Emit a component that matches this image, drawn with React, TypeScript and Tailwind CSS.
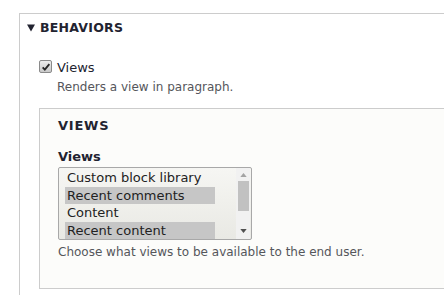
import React from "react";

const options = [
  { label: "Custom block library", selected: false },
  { label: "Recent comments", selected: true },
  { label: "Content", selected: false },
  { label: "Recent content", selected: true },
];

function Checkbox() {
  return (
    <span className="mt-px flex h-[13px] w-[13px] shrink-0 items-center justify-center rounded-[2px] border border-[#8a8a8a] bg-gradient-to-b from-[#ececec] to-[#c9c9c9]">
      <svg viewBox="0 0 12 12" className="h-[10px] w-[10px]">
        <path d="M2 6.5 L4.6 9.2 L10 2.6" fill="none" stroke="#262626" strokeWidth="2.2" />
      </svg>
    </span>
  );
}

function ViewsSelect() {
  return (
    <div className="mt-px flex h-[73px] w-[194px] rounded-[2px] border border-[#a8a8a8] bg-gradient-to-b from-[#f6f6f3] to-[#e9e9e4]">
      <div className="ml-[6px] mt-px w-[150px]">
        {options.map((o) => (
          <div
            key={o.label}
            className={`h-[17.5px] whitespace-nowrap pl-[2px] text-[13px] leading-[17.5px] text-[#222] ${
              o.selected ? "bg-[#c6c6c6]" : ""
            }`}
          >
            {o.label}
          </div>
        ))}
      </div>
      <div className="ml-auto mr-px flex w-[14px] flex-col items-center bg-[#f1f1f1]">
        <svg viewBox="0 0 8 5" className="mt-[5px] h-[4px] w-[7px]">
          <path d="M0 5 L4 0 L8 5 Z" fill="#a3a3a3" />
        </svg>
        <div className="mt-[4px] h-[30px] w-[11px] bg-[#c1c1c1]" />
        <svg viewBox="0 0 8 5" className="mt-auto mb-[6px] h-[4px] w-[7px]">
          <path d="M0 0 L8 0 L4 5 Z" fill="#505050" />
        </svg>
      </div>
    </div>
  );
}

export default function App() {
  return (
    <div className="h-[295px] w-[444px] overflow-hidden bg-white font-['DejaVu_Sans',sans-serif] text-[#222330]">
      <div className="ml-[19px] mt-[13px] h-[400px] w-[520px] border border-[#cccccc] bg-white">
        {/* Summary */}
        <div className="flex h-[28px] items-center gap-[5px] pl-[7px]">
          <svg viewBox="0 0 10 9" className="h-[8px] w-[8px]">
            <path d="M0 0 L10 0 L5 9 Z" fill="#222330" />
          </svg>
          <span className="text-[12.5px] font-bold uppercase tracking-[0.02em]">Behaviors</span>
        </div>

        <div className="pl-[19px] pt-[17px]">
          <label className="flex items-start gap-[5px]">
            <Checkbox />
            <span className="text-[13px] leading-[18px]">Views</span>
          </label>
          <div className="mt-px pl-[18px] text-[12px] leading-[18px] text-[#55565b]">
            Renders a view in paragraph.
          </div>

          {/* Inner fieldset */}
          <div className="mt-[12px] h-[181px] border border-[#cccccc] bg-[#fcfcfa] pl-[18px] pt-[8px]">
            <div className="text-[13px] font-bold uppercase leading-[18px] tracking-[0.06em]">Views</div>
            <div className="mt-[13px] text-[13px] font-bold leading-[18px]">Views</div>
            <ViewsSelect />
            <div className="mt-[3px] text-[12px] leading-[18px] text-[#55565b]">
              Choose what views to be available to the end user.
            </div>
          </div>
        </div>
      </div>
    </div>
  );
}
